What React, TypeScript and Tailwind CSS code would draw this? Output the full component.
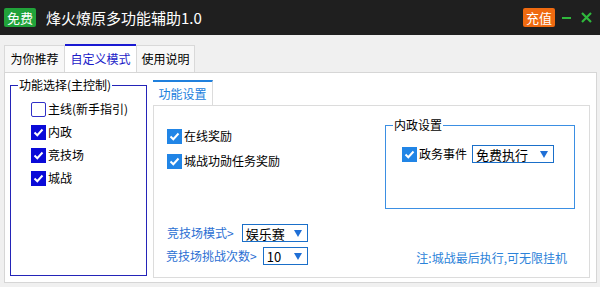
import React from 'react';

const font = { fontFamily: '"Noto Sans CJK SC", "Noto Sans", sans-serif' };

function Check({ checked, dark }: { checked: boolean; dark?: boolean }) {
  if (!checked) {
    return <span className="inline-block w-[15px] h-[15px] border-[1.5px] border-[#3030c8] rounded-[2px] bg-white" />;
  }
  return (
    <span className={`inline-flex items-center justify-center w-[15px] h-[15px] ${dark ? 'bg-[#0a0ad8]' : 'bg-[#2185e6]'}`}>
      <svg width="11" height="11" viewBox="0 0 11 11">
        <path d="M1.5 5.5 L4.3 8.2 L9.5 2.5" stroke="white" strokeWidth="2" fill="none" />
      </svg>
    </span>
  );
}

function Select({ value, width }: { value: string; width: string }) {
  return (
    <div className={`flex items-center justify-between h-[18px] ${width} border border-[#1a6fc9] bg-white pl-[3px] pr-[5px] text-[13px] text-black leading-none`}>
      <span>{value}</span>
      <svg width="8" height="7" viewBox="0 0 8 7">
        <path d="M0 0 H8 L4 7 Z" fill="#1f6fd6" />
      </svg>
    </div>
  );
}

export default function App() {
  const mainItems = [
    { label: '主线(新手指引)', checked: false },
    { label: '内政', checked: true },
    { label: '竞技场', checked: true },
    { label: '城战', checked: true },
  ];

  return (
    <div className="w-[600px] h-[287px] bg-[#f0f0f0] overflow-hidden flex flex-col" style={font}>
      {/* title bar */}
      <div className="h-[35px] bg-[#1f1f1f] flex items-center pl-[4px] pr-[8px] shrink-0">
        <span className="bg-[#21a33a] text-white text-[13px] leading-none px-[3px] py-[3px] rounded-[2px]">免费</span>
        <span className="ml-[10px] text-white text-[15px] leading-none">烽火燎原多功能辅助1.0</span>
        <div className="ml-auto flex items-center">
          <span className="bg-[#ef6a10] text-white text-[13px] leading-none px-[3px] py-[3px] rounded-[2px]">充值</span>
          <span className="ml-[7px] w-[9px] h-[2px] bg-[#2fb83c]" />
          <svg className="ml-[10px]" width="11" height="11" viewBox="0 0 11 11">
            <path d="M1 1 L10 10 M10 1 L1 10" stroke="#2fb83c" strokeWidth="2.2" />
          </svg>
        </div>
      </div>

      <div className="flex-1 pt-[9px] px-[4px] flex flex-col">
        {/* tabs */}
        <div className="flex h-[28px] text-[12px] leading-none">
          <div className="w-[61px] flex items-center justify-center border border-b-0 border-[#d9d9d9] bg-[#f7f7f7] text-black mt-[1px]">为你推荐</div>
          <div className="w-[71px] flex items-center justify-center border-t-2 border-t-[#1919d2] bg-white text-[#1b1bc8]">自定义模式</div>
          <div className="w-[59px] flex items-center justify-center border border-b-0 border-[#d9d9d9] bg-[#f7f7f7] text-black mt-[1px]">使用说明</div>
        </div>

        {/* panel */}
        <div className="h-[211px] w-[593px] bg-white border border-[#d6d6d6] flex pl-[5px] pr-[5px] pt-[7px] pb-[4px] gap-[6px]">
          {/* main control */}
          <fieldset className="w-[137px] h-[197px] border border-[#2424b8] mt-[-1px] pl-[20px]">
            <legend className="text-[12px] text-black leading-none ml-[-13px] px-[1px]">功能选择(主控制)</legend>
            <div className="flex flex-col gap-[7px] mt-[10px] text-[12px] leading-none text-black">
              {mainItems.map((it) => (
                <label key={it.label} className="flex items-center gap-[2px] h-[16px]">
                  <Check checked={it.checked} dark />
                  <span>{it.label}</span>
                </label>
              ))}
            </div>
          </fieldset>

          {/* function settings */}
          <div className="flex-1 flex flex-col mr-[1px]">
            <div className="flex">
              <div className="w-[60px] h-[26px] border-t-[2px] border-t-[#2080dd] border-r border-r-[#dcdcdc] flex items-center justify-center text-[12px] text-[#2180dd] leading-none">
                功能设置
              </div>
            </div>
            <div className="flex-1 border border-[#dcdcdc] mt-[-1px] flex flex-col pl-[13px] pr-[14px]">
              <div className="flex justify-between">
                <div className="flex flex-col gap-[9px] mt-[22px] text-[12px] leading-none text-black">
                  <label className="flex items-center gap-[2px] h-[16px]">
                    <Check checked />
                    <span>在线奖励</span>
                  </label>
                  <label className="flex items-center gap-[2px] h-[16px]">
                    <Check checked />
                    <span>城战功勋任务奖励</span>
                  </label>
                </div>
                <fieldset className="w-[190px] h-[90px] border border-[#3b8fe3] mt-[13px] pl-[16px]">
                  <legend className="text-[12px] text-black leading-none ml-[-9px] px-[1px]">内政设置</legend>
                  <div className="flex items-center mt-[14px] text-[12px] leading-none text-black">
                    <Check checked />
                    <span className="ml-[2px]">政务事件</span>
                    <div className="ml-[5px]">
                      <Select value="免费执行" width="w-[82px]" />
                    </div>
                  </div>
                </fieldset>
              </div>

              <div className="flex justify-between items-end mt-auto mb-[12px]">
                <div className="flex flex-col gap-[5px] text-[12px] leading-none text-[#2b6fd3]">
                  <div className="flex items-center">
                    <span>竞技场模式&gt;</span>
                    <div className="ml-[8px]">
                      <Select value="娱乐赛" width="w-[66px]" />
                    </div>
                  </div>
                  <div className="flex items-center ml-[-1px]">
                    <span>竞技场挑战次数&gt;</span>
                    <div className="ml-[6px]">
                      <Select value="10" width="w-[45px]" />
                    </div>
                  </div>
                </div>
                <span className="text-[12px] leading-none text-[#2b82d9] mb-[1px] mr-[8px]">注:城战最后执行,可无限挂机</span>
              </div>
            </div>
          </div>
        </div>
      </div>
    </div>
  );
}
